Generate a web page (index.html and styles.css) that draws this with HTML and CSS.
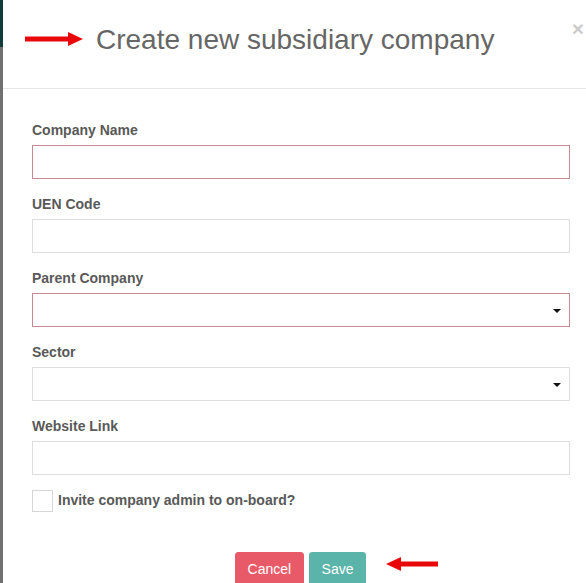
FILE: index.html
```html
<!DOCTYPE html>
<html>
<head>
<meta charset="utf-8">
<link rel="stylesheet" href="styles.css">
</head>
<body>
<div class="page">
  <div class="strip"><div class="strip-top"></div></div>
  <div class="modal">
    <div class="modal-header">
      <svg class="arrow" width="60" height="14" viewBox="0 0 60 14">
        <rect x="0" y="4.5" width="46" height="5" fill="#e8080a"/>
        <polygon points="43,0 58,7 43,14" fill="#e8080a"/>
      </svg>
      <h4 class="title">Create new subsidiary company</h4>
      <span class="close">×</span>
    </div>
    <div class="modal-body">
      <div class="form-group">
        <label class="label">Company Name</label>
        <div class="input invalid"></div>
      </div>
      <div class="form-group">
        <label class="label">UEN Code</label>
        <div class="input"></div>
      </div>
      <div class="form-group">
        <label class="label">Parent Company</label>
        <div class="input select invalid"><span class="caret"></span></div>
      </div>
      <div class="form-group">
        <label class="label">Sector</label>
        <div class="input select"><span class="caret"></span></div>
      </div>
      <div class="form-group">
        <label class="label">Website Link</label>
        <div class="input"></div>
      </div>
      <div class="check-row">
        <span class="checkbox"></span>
        <span class="check-label">Invite company admin to on-board?</span>
      </div>
    </div>
    <div class="modal-footer">
      <button class="btn btn-cancel">Cancel</button>
      <button class="btn btn-save">Save</button>
      <svg class="arrow-left" width="54" height="14" viewBox="0 0 54 14">
        <polygon points="15,0 0,7 15,14" fill="#e8080a"/>
        <rect x="12" y="4.5" width="40" height="5" fill="#e8080a"/>
      </svg>
    </div>
  </div>
</div>
</body>
</html>
```

FILE: styles.css
```css
html, body {
  margin: 0;
  padding: 0;
  background: #ffffff;
  overflow: hidden;
}
body {
  font-family: "Liberation Sans", Arial, sans-serif;
  width: 586px;
  height: 583px;
}
.page {
  display: flex;
  height: 583px;
}
.strip {
  width: 3px;
  flex-shrink: 0;
  background: #707070;
}
.strip-top {
  height: 47px;
  background: #123c3a;
}
.modal {
  width: 595px;
  flex-shrink: 0;
  background: #fff;
  position: relative;
}
.modal-header {
  display: flex;
  align-items: flex-start;
  padding: 24px 14px 33px 22px;
  border-bottom: 1px solid #e5e5e5;
}
.arrow {
  margin-top: 8px;
  margin-right: 11px;
  flex-shrink: 0;
}
.title {
  margin: 0;
  font-size: 28px;
  line-height: 31px;
  font-weight: normal;
  color: #666666;
  flex: 1;
  white-space: nowrap;
}
.close {
  font-size: 21px;
  font-weight: bold;
  line-height: 1;
  color: #000;
  opacity: 0.2;
  margin-top: -6px;
}
.modal-body {
  padding: 31px 28px 0 29px;
}
.form-group {
  margin-bottom: 15px;
}
.label {
  display: block;
  font-size: 14px;
  font-weight: bold;
  line-height: 20px;
  color: #595959;
  margin-bottom: 5px;
}
.input {
  height: 34px;
  box-sizing: border-box;
  border: 1px solid #dedede;
  background: #fff;
  position: relative;
}
.input.invalid {
  border-color: #c98a93;
}
.select {
  display: flex;
  align-items: center;
  justify-content: flex-end;
  padding-right: 8px;
}
.caret {
  width: 0;
  height: 0;
  border-left: 4px solid transparent;
  border-right: 4px solid transparent;
  border-top: 4px solid #111;
  margin-top: 2px;
}
.check-row {
  display: flex;
  align-items: center;
  gap: 5px;
  margin-top: 15px;
}
.checkbox {
  width: 19px;
  height: 20px;
  border: 1px solid #d6d6d6;
  background: #fff;
  flex-shrink: 0;
}
.check-label {
  font-size: 14px;
  font-weight: bold;
  color: #595959;
  margin-top: -2px;
}
.modal-footer {
  position: relative;
  text-align: center;
  padding-top: 40px;
}
.btn {
  font-family: "Liberation Sans", Arial, sans-serif;
  font-size: 14px;
  line-height: 20px;
  padding: 6px 12px;
  border: 1px solid transparent;
  border-radius: 3px;
  color: #fff;
  vertical-align: middle;
}
.btn-cancel {
  background: #e85a68;
  border-color: #e85a68;
}
.btn-save {
  background: #5bb4a9;
  border-color: #5bb4a9;
}
.arrow-left {
  position: absolute;
  left: 383px;
  top: 45px;
}
```
